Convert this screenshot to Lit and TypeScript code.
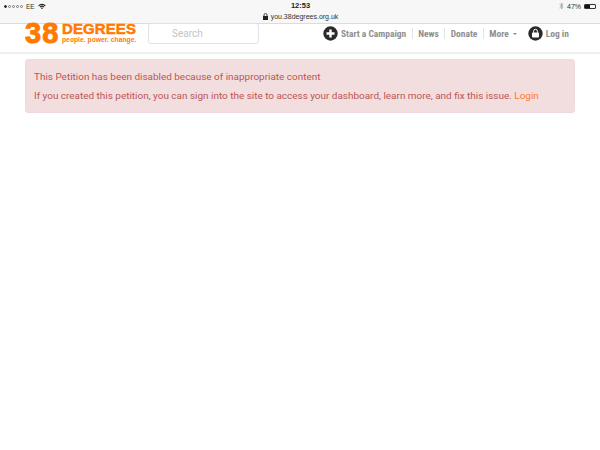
import { LitElement, html, css } from "lit";
import { customElement } from "lit/decorators.js";

@customElement("app-root")
export class AppRoot extends LitElement {
  static styles = css`
    :host { display: block; width: 600px; height: 450px; background: #fff; overflow: hidden; font-family: Roboto, "Liberation Sans", sans-serif; }
    .status { height: 23px; box-sizing: content-box; background: #f7f7f7; border-bottom: 1px solid #dcdcdc; display: grid; grid-template-columns: 1fr auto 1fr; padding: 0 3px 0 4px; color: #333; font-size: 7px; }
    .left { display: flex; align-items: center; gap: 3px; height: 12px; }
    .dots { display: flex; gap: 1px; }
    .dot { width: 3px; height: 3px; border-radius: 50%; box-sizing: border-box; border: 0.6px solid #777; }
    .dot.on { background: #222; border-color: #222; }
    .carrier { font-family: "Liberation Sans", sans-serif; font-size: 6.5px; }
    .center { display: flex; flex-direction: column; align-items: center; }
    .time { font-family: "Liberation Sans", sans-serif; font-weight: 700; font-size: 7.5px; line-height: 12px; color: #222; }
    .url { display: flex; align-items: center; gap: 3px; font-family: "Liberation Sans", sans-serif; font-size: 7px; line-height: 9px; color: #333; }
    .right { display: flex; justify-content: flex-end; align-items: center; height: 12px; gap: 3px; font-family: "Liberation Sans", sans-serif; font-size: 7px; padding-right: 1px; }
    .batt { width: 12px; height: 5px; border: 0.7px solid #333; border-radius: 1px; box-sizing: border-box; display: flex; }
    .batt i { display: block; width: 47%; background: #111; }

    .nav { height: 28px; display: flex; align-items: flex-start; padding-left: 25px; border-bottom: 2px solid #f0f0f0; }
    .logo { display: flex; gap: 3px; width: 111px; color: #ff7a00; font-family: "Liberation Sans", sans-serif; font-weight: 700; }
    .n38 { font-size: 29px; line-height: 19px; letter-spacing: 1px; -webkit-text-stroke: 1px #ff7a00; width: 34px; white-space: nowrap; }
    .words { display: flex; flex-direction: column; }
    .deg { font-size: 15px; line-height: 10px; letter-spacing: 0.1px; -webkit-text-stroke: 0.5px #ff7a00; white-space: nowrap; }
    .tag { font-size: 6.75px; line-height: 7px; margin-top: 1.5px; white-space: nowrap; }
    .search { width: 111px; height: 21px; margin: -1px 0 0 12px; box-sizing: border-box; border: 1px solid #e2e2e2; border-radius: 3px; padding-left: 23px; font-size: 10px; line-height: 19px; color: #c4c4c4; }
    .links { display: flex; align-items: center; height: 18px; margin-left: 64px; color: #8f8f8f; font-family: "Roboto Condensed", "Liberation Sans Narrow", Roboto, sans-serif; font-size: 9.45px; font-weight: 700; white-space: nowrap; }
    .ico { width: 15px; height: 15px; flex: none; }
    .sep { width: 1px; height: 11px; background: #e3e3e3; margin: 0 5.5px; }
    .caret { display: inline-block; width: 0; height: 0; border: 2.2px solid transparent; border-top-color: #8a8a8a; border-bottom: 0; margin-left: 4px; vertical-align: middle; }
    .g1 { margin-left: 3px; }
    .login { margin-left: 11px; }

    .alert { margin: 5px 25px 0; height: 54px; box-sizing: border-box; background: #f2dede; border: 1px solid #efd9db; border-radius: 3px; padding: 8px 8px; color: #bb5553; font-size: 9.95px; line-height: 17px; }
    .alert p { margin: 0 0 2px; white-space: nowrap; }
    .alert a { color: #ff7a1a; }
  `;

  render() {
    return html`
      <div class="status">
        <div class="left">
          <span class="dots"><i class="dot on"></i><i class="dot"></i><i class="dot"></i><i class="dot"></i><i class="dot"></i></span>
          <span class="carrier">EE</span>
          <svg width="8" height="7" viewBox="0 0 10 8"><path d="M0.3 2.6A6.6 6.6 0 0 1 9.7 2.6L8.7 3.6A5.2 5.2 0 0 0 1.3 3.6ZM2 4.3A4.2 4.2 0 0 1 8 4.3L7 5.3A2.8 2.8 0 0 0 3 5.3ZM3.7 6A1.8 1.8 0 0 1 6.3 6L5 7.4Z" fill="#222"/></svg>
        </div>
        <div class="center">
          <span class="time">12:53</span>
          <span class="url">
            <svg width="5" height="7" viewBox="0 0 5 7"><path d="M0 3h5v4H0z" fill="#222"/><path d="M1 3V2a1.5 1.5 0 0 1 3 0v1" fill="none" stroke="#222" stroke-width=".8"/></svg>
            you.38degrees.org.uk
          </span>
        </div>
        <div class="right">
          <svg width="5" height="8" viewBox="0 0 5 8"><path d="M0.5 2L4 5.2 2.4 7V1L4 2.8.5 6" fill="none" stroke="#999" stroke-width=".7"/></svg>
          <span>47%</span>
          <span class="batt"><i></i></span>
        </div>
      </div>
      <div class="nav">
        <div class="logo">
          <span class="n38">38</span>
          <span class="words">
            <span class="deg">DEGREES</span>
            <span class="tag">people. power. change.</span>
          </span>
        </div>
        <div class="search">Search</div>
        <div class="links">
          <svg class="ico" viewBox="0 0 15 15"><circle cx="7.5" cy="7.5" r="7.2" fill="#2b2b2b"/><path d="M7.5 3.5v8M3.5 7.5h8" stroke="#fff" stroke-width="2.4"/></svg>
          <span class="g1">Start a Campaign</span>
          <i class="sep"></i>
          <span>News</span>
          <i class="sep"></i>
          <span>Donate</span>
          <i class="sep"></i>
          <span>More<i class="caret"></i></span>
          <svg class="ico login" viewBox="0 0 15 15"><circle cx="7.5" cy="7.5" r="7.2" fill="#2b2b2b"/><rect x="4" y="6.5" width="7" height="5" rx=".8" fill="#fff"/><path d="M5.6 6.8V5.2a1.9 1.9 0 0 1 3.8 0v1.6" fill="none" stroke="#fff" stroke-width="1"/></svg>
          <span class="g1">Log in</span>
        </div>
      </div>
      <div class="alert">
        <p>This Petition has been disabled because of inappropriate content</p>
        <p>If you created this petition, you can sign into the site to access your dashboard, learn more, and fix this issue. <a>Login</a></p>
      </div>
    `;
  }
}
